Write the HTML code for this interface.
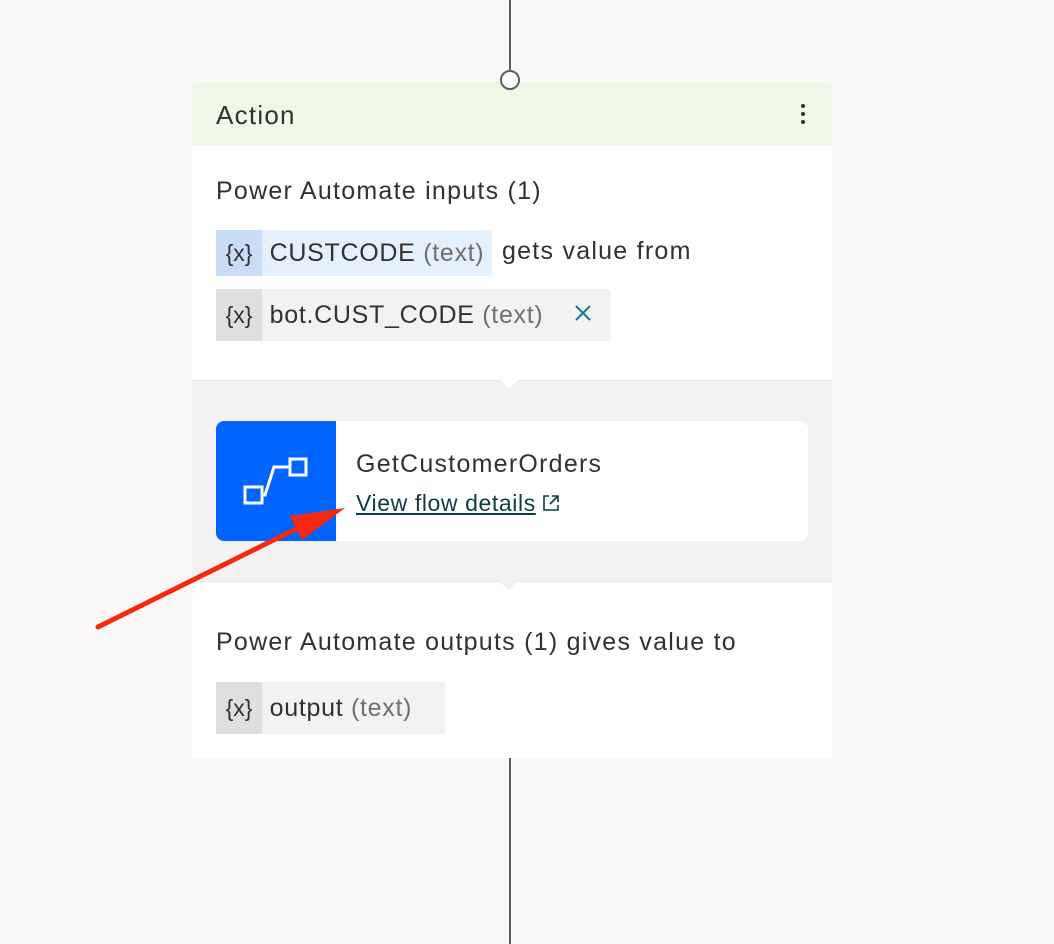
<!DOCTYPE html>
<html><head><style>
body{margin:0;width:1054px;height:944px;background:#f9f8f6;font-family:"Liberation Sans",sans-serif;color:#323130;position:relative;overflow:hidden}
.a{position:absolute}
.t{font-size:25px;letter-spacing:1.25px;white-space:nowrap}
.chip{position:absolute;height:46px;display:flex;align-items:center;font-size:25px;letter-spacing:0.7px;white-space:nowrap;border-radius:3px}
.chip .x{width:46px;height:46px;display:flex;align-items:center;justify-content:center;font-size:23px;letter-spacing:0}
.g{color:#707070}
</style></head><body>
<div class="a" style="left:509px;top:0;width:2px;height:72px;background:#605e5c"></div>
<div class="a" style="left:509px;top:758px;width:2px;height:186px;background:#605e5c"></div>
<div class="a" style="left:192px;top:82px;width:640px;height:676px;background:#fff;border-radius:3px;overflow:hidden">
  <div class="a" style="left:0;top:0;width:640px;height:64px;background:#eff7e6"></div>
  <div class="a t" style="left:24px;top:18px;font-size:26px">Action</div>
  <div class="a" style="left:609px;top:22px;width:4px;height:4px;border-radius:2px;background:#323130;box-shadow:0 8px 0 #323130,0 16px 0 #323130"></div>
  <div class="a t" style="left:24px;top:95px">Power Automate inputs (1)</div>
  <div class="chip" style="left:24px;top:148px;width:276px;background:#e5f0fd"><div class="x" style="background:#c8dcf8">{x}</div>&nbsp;CUSTCODE&nbsp;<span class="g">(text)</span></div>
  <div class="a t" style="left:310px;top:155px">gets value from</div>
  <div class="chip" style="left:24px;top:207px;width:395px;height:52px;background:#f3f2f1"><div class="x" style="background:#e1dfdd;height:52px">{x}</div>&nbsp;bot.CUST_CODE&nbsp;<span class="g">(text)</span></div>
  <svg class="a" style="left:382px;top:222px" width="18" height="18"><path d="M2 2L16 16M16 2L2 16" stroke="#1a7a8c" stroke-width="2"/></svg>
  <div class="a" style="left:0;top:298px;width:640px;height:200px;background:#f3f2f1;border-top:1px solid #e8e6e4;border-bottom:1px solid #e8e6e4"></div>
  <div class="a" style="left:310px;top:290px;width:14px;height:14px;background:#fff;transform:rotate(45deg)"></div>
  <div class="a" style="left:310px;top:492px;width:14px;height:14px;background:#f3f2f1;transform:rotate(45deg)"></div>
  <div class="a" style="left:24px;top:339px;width:592px;height:120px;background:#fff;border-radius:8px;overflow:hidden">
    <div class="a" style="left:0;top:0;width:120px;height:120px;background:#0065ff">
      <svg width="120" height="120" style="position:absolute;left:0;top:0"><g fill="none" stroke="#fff" stroke-width="3"><rect x="29" y="66" width="17" height="16"/><rect x="74" y="38" width="16" height="16"/><path d="M46 74h3l9-28h16"/></g></svg>
    </div>
    <div class="a t" style="left:140px;top:29px">GetCustomerOrders</div>
    <div class="a t" style="left:140px;top:69px;font-size:23px;letter-spacing:0.6px;color:#0e3a4a;text-decoration:underline">View flow details</div>
    <svg class="a" style="left:326px;top:73px" width="18" height="18"><g fill="none" stroke="#0e3a4a" stroke-width="1.6"><path d="M7 2H2v14h14v-5"/><path d="M10 2h6v6M16 2L8 10"/></g></svg>
  </div>
  <div class="a t" style="left:24px;top:546px">Power Automate outputs (1) gives value to</div>
  <div class="chip" style="left:24px;top:600px;width:229px;height:52px;background:#f3f2f1"><div class="x" style="background:#e1dfdd;height:52px">{x}</div>&nbsp;output&nbsp;<span class="g">(text)</span></div>
</div>
<div class="a" style="left:500px;top:70px;width:20px;height:20px;border:2px solid #605e5c;border-radius:50%;background:#fff;box-sizing:border-box"></div>
<svg class="a" style="left:0;top:0" width="1054" height="944"><line x1="98" y1="627" x2="310" y2="522" stroke="#f5290f" stroke-width="5" stroke-linecap="round"/><polygon points="345,508 290,516 302,540" fill="#f5290f"/></svg>
</body></html>
